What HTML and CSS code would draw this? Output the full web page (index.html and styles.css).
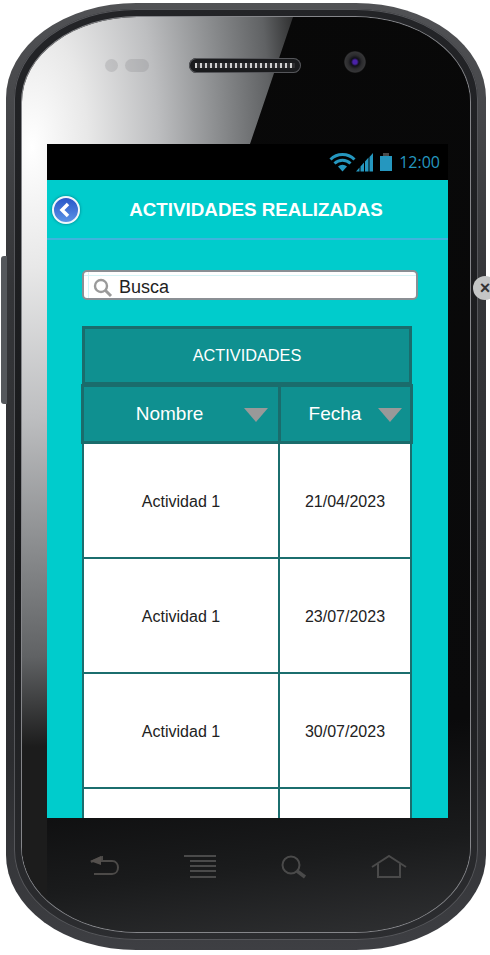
FILE: index.html
```html
<!DOCTYPE html>
<html lang="en">
<head>
    <meta charset="UTF-8">
    <title>Actividades realizadas</title>
    <link rel="stylesheet" href="styles.css">
</head>
<body>

<div class="side-button"></div>
<div class="close-handle">×</div>

<div class="phone">
    <div class="rim">
        <div class="glass">
            <div class="gloss"></div>

            <div class="earpiece-row">
                <div class="sensors">
                    <span class="sensor-dot"></span>
                    <span class="sensor-pill"></span>
                </div>
                <div class="speaker"><span class="speaker-holes"></span></div>
                <div class="camera"></div>
            </div>

            <div class="screen">
                <div class="status-bar">
                    <svg class="wifi" width="27" height="19" viewBox="0 0 27 19">
                        <path d="M1.500 6.500a17 17 0 0 1 24 0" fill="none" stroke="#2597bf" stroke-width="3"/>
                        <path d="M5.500 10.500a11.500 11.500 0 0 1 16 0" fill="none" stroke="#2597bf" stroke-width="3"/>
                        <path d="M9 13.500a6.500 6.500 0 0 1 9 0l-4.500 5z" fill="#2597bf"/>
                    </svg>
                    <svg class="signal" width="17" height="19" viewBox="0 0 17 19">
                        <path d="M0 18.500h3.500v-4zM4.500 18.500h3.500v-9l-3.500 4zM9 18.500h3.500V4.500L9 8.500z" fill="#2597bf"/>
                        <path d="M13.500 18.500H17V0l-3.500 4z" fill="#2597bf"/>
                    </svg>
                    <div class="battery"></div>
                    <span class="clock">12:00</span>
                </div>

                <div class="app-bar">
                    <div class="back-button">
                        <svg width="16" height="16" viewBox="0 0 16 16">
                            <path d="M10 2 4 8l6 6" fill="none" stroke="#fff" stroke-width="3.500"/>
                        </svg>
                    </div>
                    <h1>ACTIVIDADES REALIZADAS</h1>
                </div>

                <div class="content">
                    <div class="search">
                        <svg width="20" height="20" viewBox="0 0 20 20">
                            <circle cx="8" cy="8" r="6" fill="none" stroke="#9a9a9a" stroke-width="2.400"/>
                            <path d="m12.500 12.500 5.500 5.500" stroke="#9a9a9a" stroke-width="3"/>
                        </svg>
                        <span>Busca</span>
                    </div>

                    <div class="table">
                        <div class="table-title">ACTIVIDADES</div>
                        <div class="row head">
                            <div class="cell">
                                <span class="head-label">Nombre</span>
                                <span class="sort-arrow"></span>
                            </div>
                            <div class="cell">
                                <span class="head-label">Fecha</span>
                                <span class="sort-arrow"></span>
                            </div>
                        </div>
                        <div class="row body-row">
                            <div class="cell">Actividad 1</div>
                            <div class="cell">21/04/2023</div>
                        </div>
                        <div class="row body-row">
                            <div class="cell">Actividad 1</div>
                            <div class="cell">23/07/2023</div>
                        </div>
                        <div class="row body-row">
                            <div class="cell">Actividad 1</div>
                            <div class="cell">30/07/2023</div>
                        </div>
                        <div class="row body-row">
                            <div class="cell"></div>
                            <div class="cell"></div>
                        </div>
                    </div>
                </div>
            </div>

            <div class="nav-keys">
                <svg width="30" height="22" viewBox="0 0 30 22">
                    <path d="M1 6 12 1v4h10c8 0 8 13 0 13H4" fill="none" stroke="#4c4a48" stroke-width="2"/>
                    <path d="M0 5 11 0v9z" fill="#54504d"/>
                </svg>
                <svg width="32" height="24" viewBox="0 0 32 24">
                    <path d="M0 1h32M6 6h26M6 11h26M6 16h26M6 22h26" stroke="#4a4a4a" stroke-width="2"/>
                </svg>
                <svg width="26" height="24" viewBox="0 0 26 24">
                    <circle cx="10" cy="10" r="8.500" fill="none" stroke="#4a4a4a" stroke-width="2"/>
                    <path d="m16 16 8 6" stroke="#4a4a4a" stroke-width="3.500"/>
                </svg>
                <svg width="36" height="24" viewBox="0 0 36 24">
                    <path d="M1 12 18 1l17 11M7 9v13h22V9" fill="none" stroke="#4a4a4a" stroke-width="2"/>
                </svg>
            </div>
        </div>
    </div>
</div>

</body>
</html>
```

FILE: styles.css
```css
/* Page */
body {
    margin: 0;
    width: 490px;
    height: 955px;
    overflow: hidden;
    position: relative;
    background: #ffffff;
    font-family: "Liberation Sans", Arial, sans-serif;
}

/* Handset */
.phone {
    box-sizing: border-box;
    width: 480px;
    height: 947px;
    margin: 3px 0 0 6px;
    padding: 6px 8px 10px;
    border-radius: 130px 130px 130px 130px / 95px 95px 95px 95px;
    background: linear-gradient(180deg, #515255 0%, #343538 30%, #2c2d30 80%, #3e3f43 100%);
}

.rim {
    height: 100%;
    box-sizing: border-box;
    padding: 8px;
    border-radius: 122px 122px 122px 122px / 90px 90px 90px 90px;
    background: linear-gradient(180deg, #232427, #18191b 60%, #2c2d30);
    box-shadow: inset 0 0 0 1px #55565a;
}

.glass {
    height: 100%;
    box-sizing: border-box;
    position: relative;
    overflow: hidden;
    padding: 0 22px 0 25px;
    border-radius: 115px 115px 115px 115px / 85px 85px 85px 85px;
    background: linear-gradient(172deg, #080808 0%, #0a0a0b 78%, #1a1b1c 90%, #303133 100%);
    box-shadow: 0 0 0 1px #85868a;
}

.gloss {
    position: absolute;
    left: 0;
    top: 0;
    width: 290px;
    height: 100%;
    background: radial-gradient(ellipse 280px 600px at 10px 130px, #ffffff 0, #e8e8e8 20%, #bdbec0 45%, #8c8e90 66%, #606264 85%, #1c1c1c 100%);
    clip-path: polygon(0 0, 271px 0, 228px 127px, 25px 127px, 25px 100%, 0 100%);
}

/* Earpiece, sensors and camera */
.earpiece-row {
    position: relative;
    height: 127px;
}

.sensors {
    position: absolute;
    left: 58px;
    top: 42px;
    display: flex;
    gap: 7px;
}

.sensor-dot {
    width: 13px;
    height: 13px;
    border-radius: 50%;
    background: rgba(120, 120, 125, 0.22);
}

.sensor-pill {
    width: 24px;
    height: 13px;
    border-radius: 7px;
    background: rgba(120, 120, 125, 0.22);
}

.speaker {
    position: absolute;
    left: 142px;
    top: 41px;
    box-sizing: border-box;
    width: 112px;
    height: 15px;
    padding: 5px 6px;
    border-radius: 8px;
    background: #1a1b1d;
    box-shadow: inset 0 0 0 1px #55565a;
}

.speaker-holes {
    display: block;
    height: 5px;
    background: repeating-linear-gradient(90deg, #cfcfcf 0 2px, #303032 2px 5px);
}

.camera {
    position: absolute;
    left: 297px;
    top: 34px;
    width: 22px;
    height: 22px;
    border-radius: 50%;
    background: radial-gradient(circle, #4a22a8 0 2px, #101018 4px, #2c2c2e 7px, #353537 10px, #1a1a1a 11px);
}

/* Screen */
.screen {
    position: relative;
    width: 401px;
    height: 674px;
    overflow: hidden;
    background: #00cccc;
}

.status-bar {
    display: flex;
    align-items: center;
    justify-content: flex-end;
    height: 36px;
    padding-right: 8px;
    box-sizing: border-box;
    background: #000000;
}

.signal {
    margin-right: 7px;
}

.battery {
    position: relative;
    width: 12px;
    height: 15px;
    margin: 3px 7px 0 0;
    background: #2597bf;
}

.battery::before {
    content: "";
    position: absolute;
    left: 3px;
    top: -3px;
    width: 6px;
    height: 3px;
    background: #4a4a4a;
}

.clock {
    font-family: "Open Sans", "Liberation Sans", sans-serif;
    font-size: 16px;
    color: #2597bf;
}

.app-bar {
    position: relative;
    display: flex;
    align-items: center;
    justify-content: center;
    box-sizing: content-box;
    height: 56px;
    padding: 2px 0 0 17px;
    border-bottom: 2px solid #40b4dc;
}

.app-bar h1 {
    margin: 0;
    font-size: 18.800px;
    font-weight: bold;
    color: #ffffff;
}

.back-button {
    position: absolute;
    left: 5px;
    top: 16px;
    display: flex;
    align-items: center;
    justify-content: center;
    box-sizing: border-box;
    width: 28px;
    height: 28px;
    border: 2px solid #f2f6fb;
    border-radius: 50%;
    background: linear-gradient(180deg, #2a56c8, #5b93e6);
    box-shadow: 0 0 3px rgba(0, 60, 80, 0.6);
}

.content {
    padding: 30px 0 0 34px;
}

/* Search field */
.search {
    display: flex;
    align-items: center;
    gap: 6px;
    box-sizing: border-box;
    width: 336px;
    height: 30px;
    margin-left: 1px;
    padding: 5px 0 0 9px;
    border: 2px solid #8a8f94;
    border-radius: 5px;
    background:
        linear-gradient(#d4f4f6, #d4f4f6) 0 3px / 100% 1px no-repeat,
        linear-gradient(#d4f4f6, #d4f4f6) 4px 0 / 1px 100% no-repeat,
        #ffffff;
    font-size: 18px;
    color: #222222;
}

/* Table */
.table {
    width: 332px;
    margin-top: 26px;
}

.table-title {
    box-sizing: border-box;
    width: 330px;
    height: 59px;
    margin-left: 1px;
    line-height: 53px;
    text-align: center;
    font-size: 16.300px;
    color: #ffffff;
    background: #0f9090;
    border: 3px solid #1a6c6c;
}

.row {
    display: grid;
    grid-template-columns: 197px 135px;
}

.head {
    height: 60px;
    margin-top: -1px;
    background: #0f9090;
    border-top: 3px solid #1a6c6c;
    border-bottom: 3px solid #1a6c6c;
    box-sizing: border-box;
}

.head .cell {
    position: relative;
    font-size: 19px;
    color: #ffffff;
    background: transparent;
    border-left: 3px solid #1a6c6c;
    border-right: 0;
    padding: 0 21px 0 0;
}

.head .cell:first-child {
    padding-right: 23px;
}

.head .cell:last-child {
    border-right: 3px solid #1a6c6c;
}

.sort-arrow {
    position: absolute;
    right: 10px;
    top: 21px;
    border-left: 12px solid transparent;
    border-right: 12px solid transparent;
    border-top: 14px solid #999999;
}

.head .cell:last-child .sort-arrow {
    right: 8px;
}

.cell {
    display: flex;
    align-items: center;
    justify-content: center;
    box-sizing: border-box;
    padding-top: 3px;
    background: #ffffff;
    font-size: 16px;
    color: #222222;
    border-left: 2px solid #1b6e6e;
}

.body-row {
    height: 115px;
    width: 330px;
    grid-template-columns: 196px 134px;
    margin-left: 1px;
    border-bottom: 2px solid #1b6e6e;
    box-sizing: border-box;
}

.body-row .cell:last-child {
    border-right: 2px solid #1b6e6e;
}

/* Hardware keys */
.nav-keys {
    position: relative;
    display: flex;
    align-items: center;
    justify-content: space-between;
    width: 317px;
    margin: 37px 0 0 43px;
}

/* Bits sticking out of the handset */
.side-button {
    position: absolute;
    left: 1px;
    top: 256px;
    width: 6px;
    height: 148px;
    border-radius: 3px 0 0 3px;
    background: #55585c;
}

.close-handle {
    position: absolute;
    left: 473px;
    top: 276px;
    z-index: 2;
    width: 24px;
    height: 24px;
    border-radius: 50%;
    background: #c4c6c6;
    color: #333333;
    font-size: 18px;
    font-weight: bold;
    line-height: 24px;
    text-align: center;
}
```
